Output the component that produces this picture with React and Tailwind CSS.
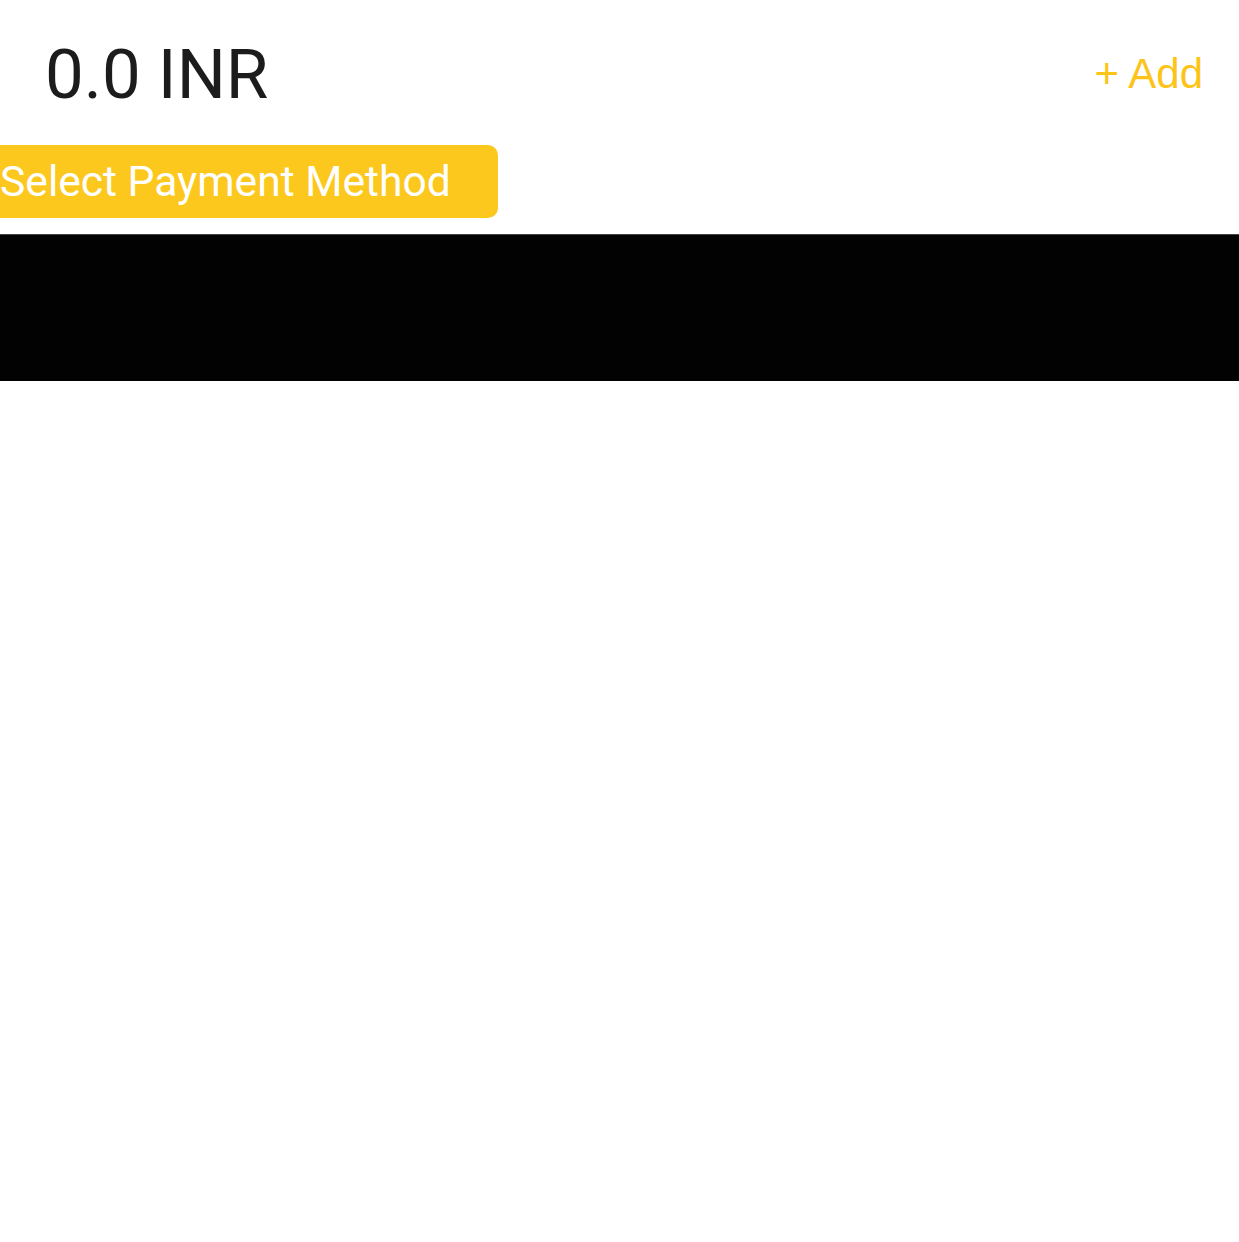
import React from 'react';

const App = () => {
    return (
        <div className="min-h-[1242px] bg-white" style={{ fontFamily: 'Roboto, "Noto Sans", sans-serif' }}>
            <div className="flex items-center justify-between pl-[45px] pr-[36px] pt-[30px] h-[118px]">
                <span className="text-[69px] leading-none text-[#1c1c1c]">0.0 INR</span>
                <button className="text-[42px] leading-none text-[#fcc419]" style={{ fontFamily: '"Liberation Sans", Arial, sans-serif' }}>
                    + Add
                </button>
            </div>
            <div className="mt-[27px]">
                <button className="w-[498px] h-[73px] rounded-r-[10px] bg-[#fdc81e] text-white text-[42.6px] text-left pl-0 leading-none">
                    Select Payment Method
                </button>
            </div>
            <div className="mt-[16px] h-[147px] bg-[#020202] border-t border-[#444444]"></div>
        </div>
    );
};

export default App;
